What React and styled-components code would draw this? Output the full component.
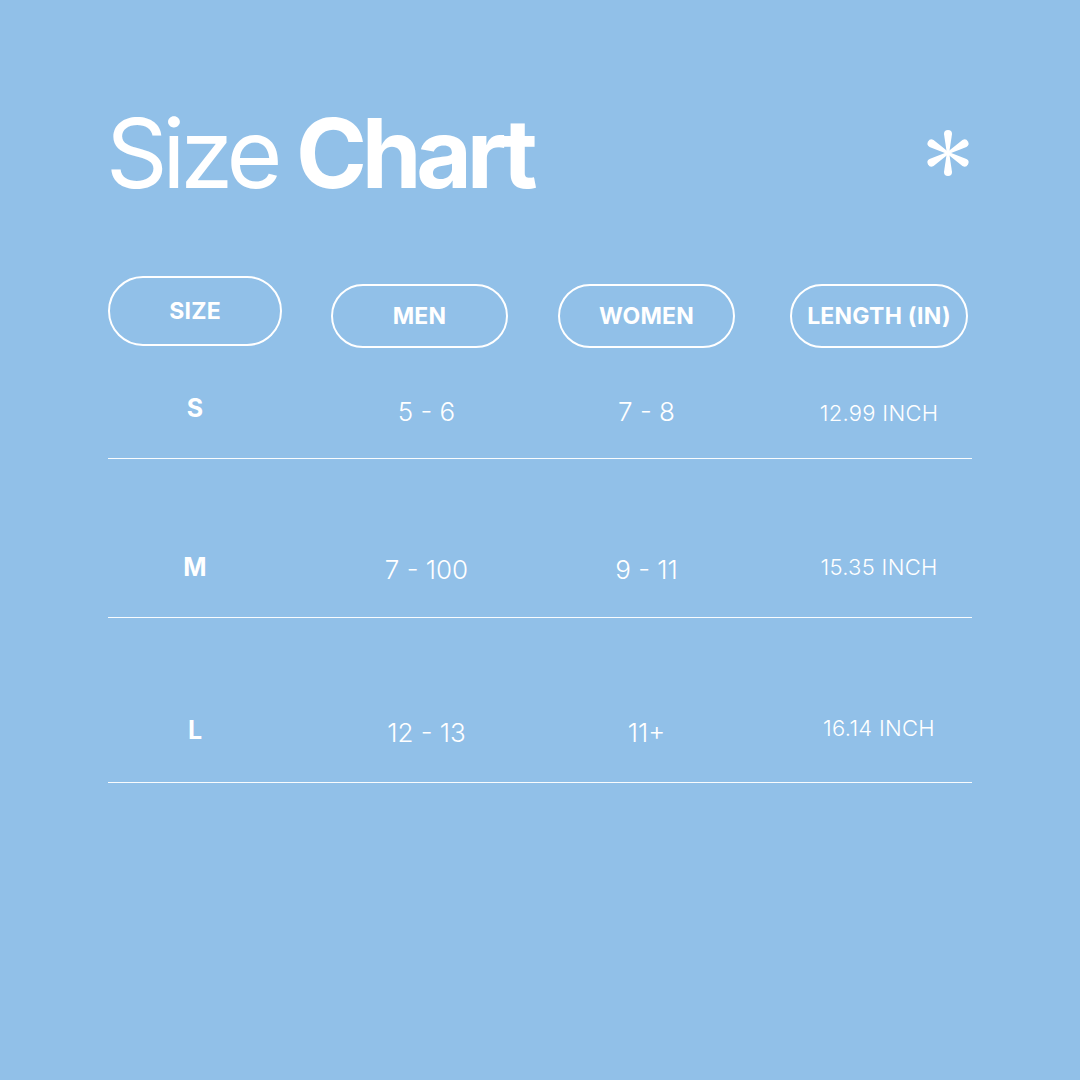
import React from 'react';
import styled, { createGlobalStyle } from 'styled-components';

const GlobalStyle = createGlobalStyle`
  html, body {
    margin: 0;
    padding: 0;
    background: #91c0e8;
  }
  body {
    font-family: 'Inter', 'Liberation Sans', sans-serif;
    color: #ffffff;
  }
`;

const Page = styled.div`
  width: 1080px;
  height: 1080px;
  box-sizing: border-box;
  padding: 100px 108px 0 108px;
  background: #91c0e8;
`;

const TitleBar = styled.div`
  display: flex;
  align-items: flex-start;
  justify-content: space-between;
  height: 176px;
`;

const Title = styled.h1`
  margin: 5px 0 0 -2px;
  font-size: 96px;
  line-height: 96px;
  font-weight: 400;
  letter-spacing: -0.055em;
  word-spacing: -3px;
  b {
    font-weight: 700;
  }
`;

const Asterisk = styled.svg`
  width: 52px;
  height: 52px;
  margin-top: 27px;
  margin-right: -2px;
`;

const Table = styled.div`
  width: 864px;
`;

const Grid = styled.div`
  display: grid;
  grid-template-columns: 223px 227px 232px 1fr;
  align-items: start;
`;

const HeaderRow = styled(Grid)``;

const Pill = styled.div`
  box-sizing: border-box;
  width: ${p => p.$w}px;
  height: ${p => p.$h}px;
  margin-top: ${p => p.$top || 0}px;
  border: 2px solid #ffffff;
  border-radius: 999px;
  display: flex;
  align-items: center;
  justify-content: center;
  font-size: 23px;
  font-weight: 700;
  letter-spacing: 0.01em;
`;

const Row = styled(Grid)`
  padding-top: ${p => p.$top}px;
  padding-bottom: ${p => p.$bottom}px;
  border-bottom: 1px solid rgba(255, 255, 255, 0.95);
  align-items: center;
`;

const Cell = styled.div`
  width: ${p => p.$w}px;
  height: 30px;
  display: flex;
  align-items: center;
  justify-content: center;
  transform: translate(${p => p.$dx || 0}px, ${p => p.$dy || 0}px);
`;

const SizeCell = styled(Cell)`
  font-size: 25px;
  font-weight: 700;
`;

const ValueCell = styled(Cell)`
  font-size: 26px;
  font-weight: 300;
`;

const InchCell = styled(Cell)`
  font-size: 22px;
  font-weight: 300;
  letter-spacing: 0.3px;
`;

const widths = [174, 177, 177, 178];

const rows = [
  { size: 'S', men: '5 - 6', women: '7 - 8', len: '12.99 INCH', top: 47, bottom: 33, dy: [-2, 1, 1, 3] },
  { size: 'M', men: '7 - 100', women: '9 - 11', len: '15.35 INCH', top: 94, bottom: 34, dy: [-1, 1, 1, -1] },
  { size: 'L', men: '12 - 13', women: '11+', len: '16.14 INCH', top: 98, bottom: 36, dy: [-1, 1, 1, -3] },
];

function AsteriskIcon() {
  const arm = 'M -1.2 0 L -4 -19 A 4 4 0 1 1 4 -19 L 1.2 0 Z';
  return (
    <Asterisk viewBox="-26 -26 52 52">
      {[0, 60, 120, 180, 240, 300].map(a => (
        <path key={a} d={arm} fill="#ffffff" transform={`rotate(${a})`} />
      ))}
      <circle r="2.5" fill="#ffffff" />
    </Asterisk>
  );
}

export default function App() {
  return (
    <Page>
      <GlobalStyle />
      <TitleBar>
        <Title>Size <b>Chart</b></Title>
        <AsteriskIcon />
      </TitleBar>
      <Table>
        <HeaderRow>
          <Pill $w={174} $h={70}>SIZE</Pill>
          <Pill $w={177} $h={64} $top={8}>MEN</Pill>
          <Pill $w={177} $h={64} $top={8}>WOMEN</Pill>
          <Pill $w={178} $h={64} $top={8}>LENGTH (IN)</Pill>
        </HeaderRow>
        {rows.map(r => (
          <Row key={r.size} $top={r.top} $bottom={r.bottom}>
            <SizeCell $w={widths[0]} $dy={r.dy[0]}>{r.size}</SizeCell>
            <ValueCell $w={widths[1]} $dx={7} $dy={r.dy[1]}>{r.men}</ValueCell>
            <ValueCell $w={widths[2]} $dy={r.dy[2]}>{r.women}</ValueCell>
            <InchCell $w={widths[3]} $dy={r.dy[3]}>{r.len}</InchCell>
          </Row>
        ))}
      </Table>
    </Page>
  );
}
